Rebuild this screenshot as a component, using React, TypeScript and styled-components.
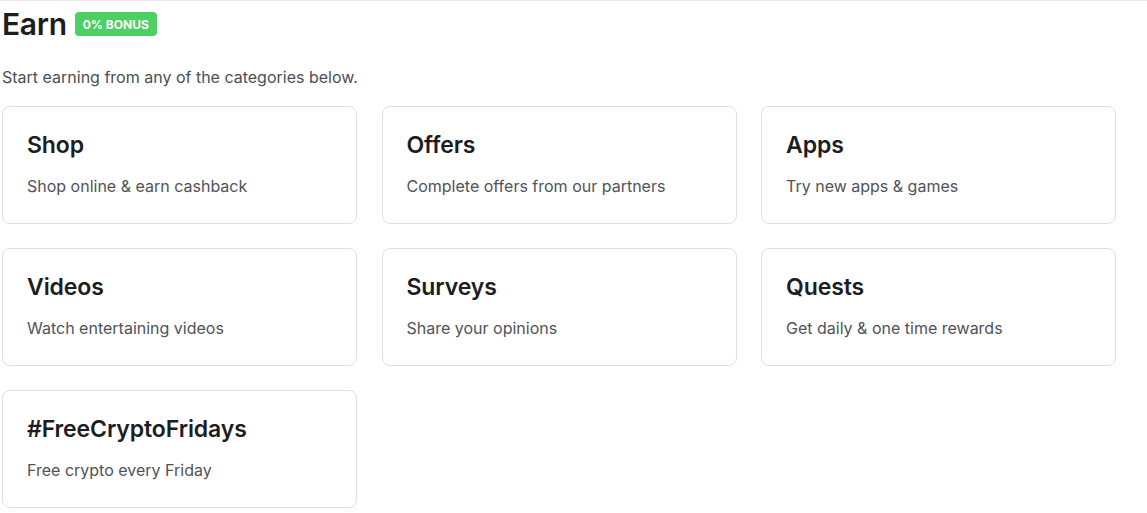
import styled, { createGlobalStyle } from 'styled-components'

const GlobalStyle = createGlobalStyle`
  html, body {
    margin: 0;
    padding: 0;
    background: #ffffff;
  }
  body {
    font-family: Inter, "Noto Sans", sans-serif;
    -webkit-font-smoothing: antialiased;
  }
`

const Page = styled.div`
  border-top: 1px solid #e6e6e6;
  padding: 0 30px 0 2px;
`

const Header = styled.div`
  display: flex;
  align-items: center;
  gap: 8px;
  height: 44px;
  padding-top: 1px;
`

const Title = styled.h1`
  margin: 0;
  font-size: 30px;
  line-height: 36px;
  font-weight: 600;
  color: #1d1d1f;
  letter-spacing: -0.3px;
`

const Badge = styled.span`
  display: inline-flex;
  align-items: center;
  height: 24px;
  padding: 0 8px;
  border-radius: 4px;
  background-color: #4ccf64;
  color: #ffffff;
  font-size: 12px;
  font-weight: 700;
`

const Subtitle = styled.p`
  margin: 19px 0 0;
  font-size: 16px;
  line-height: 24px;
  color: #4b4f56;
`

const Grid = styled.div`
  display: grid;
  grid-template-columns: repeat(3, 355px);
  column-gap: 24.5px;
  row-gap: 24px;
  margin-top: 17px;
`

const Card = styled.a`
  display: flex;
  flex-direction: column;
  box-sizing: border-box;
  height: 118px;
  padding: 23px 24px 0;
  border: 1px solid #e0e0e3;
  border-radius: 8px;
  background: #ffffff;
  text-decoration: none;
  cursor: pointer;
`

const CardTitle = styled.h2`
  margin: 0;
  font-size: 23px;
  line-height: 30px;
  font-weight: 600;
  color: #1d1d1f;
  letter-spacing: -0.1px;
`

const CardText = styled.p`
  margin: 14px 0 0;
  font-size: 16px;
  line-height: 24px;
  color: #4f535a;
`

const categories = [
  { title: 'Shop', text: 'Shop online & earn cashback' },
  { title: 'Offers', text: 'Complete offers from our partners' },
  { title: 'Apps', text: 'Try new apps & games' },
  { title: 'Videos', text: 'Watch entertaining videos' },
  { title: 'Surveys', text: 'Share your opinions' },
  { title: 'Quests', text: 'Get daily & one time rewards' },
  { title: '#FreeCryptoFridays', text: 'Free crypto every Friday' },
]

export default function App() {
  return (
    <>
      <GlobalStyle />
      <Page>
        <Header>
          <Title>Earn</Title>
          <Badge>0% BONUS</Badge>
        </Header>
        <Subtitle>Start earning from any of the categories below.</Subtitle>
        <Grid>
          {categories.map((c) => (
            <Card key={c.title}>
              <CardTitle>{c.title}</CardTitle>
              <CardText>{c.text}</CardText>
            </Card>
          ))}
        </Grid>
      </Page>
    </>
  )
}
